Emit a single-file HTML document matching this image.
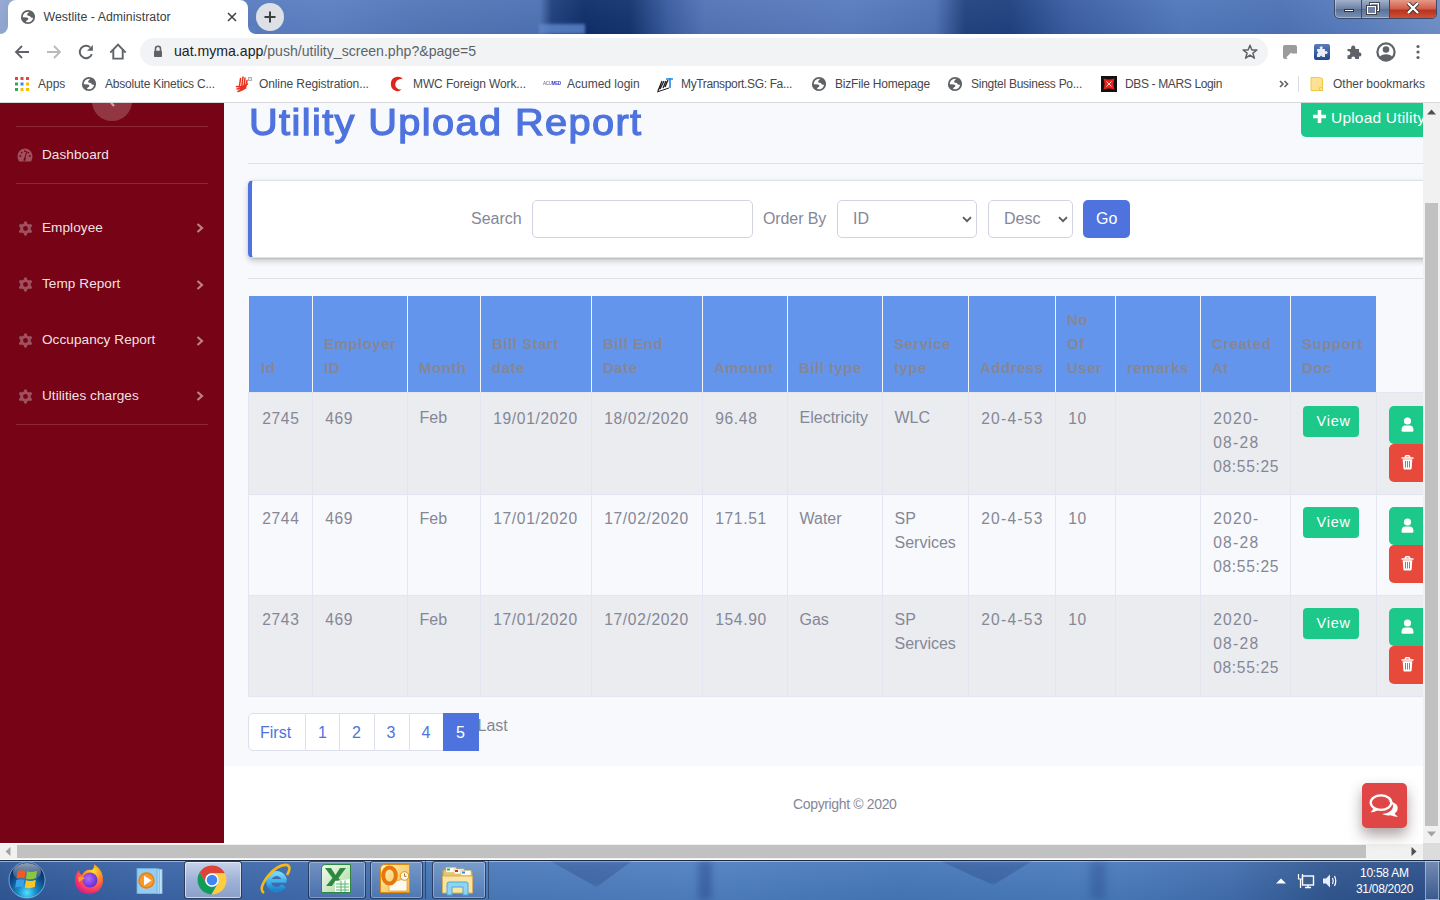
<!DOCTYPE html>
<html><head><meta charset="utf-8">
<style>
*{margin:0;padding:0;box-sizing:border-box}
html,body{width:1440px;height:900px;overflow:hidden;background:#fff;font-family:"Liberation Sans",sans-serif}
.a{position:absolute;white-space:nowrap;line-height:1}
#desk{position:absolute;left:0;top:0;width:1440px;height:34px;
background:
 linear-gradient(180deg,rgba(255,255,255,.04),rgba(0,0,0,.03)),
 linear-gradient(90deg,#93a8d2 0px,#8ea4cf 8px,#6a8ac6 120px,#5a7cc0 250px,#5d7fc2 330px,#5577b8 420px,#4f72b4 540px,#1f407e 552px,#0f2f6a 585px,#143470 630px,#3a5ca0 668px,#5474b6 705px,#5a7cbe 850px,#5072b5 935px,#21437f 965px,#1f417f 1010px,#3b5ea3 1070px,#5278bb 1180px,#4e73b5 1280px,#5a7fc0 1360px,#7090c8 1440px);}
#tab{position:absolute;left:8px;top:0;width:240px;height:34px;background:#fff;border-radius:8px 8px 0 0}
#tabflareL{position:absolute;left:0;top:26px;width:8px;height:8px;background:#fff}
#tabflareL:after{content:"";position:absolute;left:0;top:0;width:8px;height:8px;background:#8fa4cf;border-bottom-right-radius:8px}
#tabflareR{position:absolute;left:248px;top:26px;width:8px;height:8px;background:#fff}
#tabflareR:after{content:"";position:absolute;left:0;top:0;width:8px;height:8px;background:#5a7ec0;border-bottom-left-radius:8px}
#toolbar{position:absolute;left:0;top:34px;width:1440px;height:68px;background:#fff}
#omni{position:absolute;left:140px;top:38px;width:1128px;height:28px;background:#f1f3f4;border-radius:14px}
#sep{position:absolute;left:0;top:102px;width:1440px;height:1px;background:#d6d8db}
#sidebar{position:absolute;left:0;top:103px;width:224px;height:740px;background:#770416;overflow:hidden}
#main{position:absolute;left:224px;top:103px;width:1199px;height:663px;background:#f8f9fc;overflow:hidden}
#footer{position:absolute;left:224px;top:766px;width:1199px;height:77px;background:#fff}
#vscroll{position:absolute;left:1423px;top:103px;width:17px;height:740px;background:#f1f1f1}
#hscroll{position:absolute;left:0;top:843px;width:1423px;height:17px;background:#f1f1f1}
#corner{position:absolute;left:1423px;top:843px;width:17px;height:17px;background:#dcdcdc}
#taskbar{position:absolute;left:0;top:860px;width:1440px;height:40px;
background:linear-gradient(180deg,rgba(255,255,255,.06),rgba(0,0,0,.04)),linear-gradient(90deg,#2f5796 0,#3a64a6 150px,#3f6aac 300px,#4a7aba 480px,#4f7fc0 700px,#4577b8 900px,#4a7bbd 1100px,#416eae 1230px,#30568f 1330px,#2b4e8a 1440px);}
.sb-item{position:absolute;left:42px;color:#f3e6e8;font-size:13.5px}
.bm{top:78px;font-size:12px;color:#45484c}
th,td{font-family:"Liberation Sans",sans-serif}
</style></head><body>
<div id="desk"></div>
<div class="a" style="left:539px;top:24px;width:46px;height:10px;background:rgba(95,135,205,.8);filter:blur(1.5px)"></div>
<div id="tabflareL"></div><div id="tabflareR"></div>
<div id="tab"></div>
<div id="toolbar"></div>
<div id="omni"></div>
<div id="sep"></div>
<div id="chrome"><svg width="0" height="0" style="position:absolute"><defs><clipPath id="gc"><circle cx="7" cy="7" r="6.9"/></clipPath><g id="globe"><circle cx="7" cy="7" r="6.1" fill="none" stroke="#5f6368" stroke-width="1.8"/><g clip-path="url(#gc)"><path d="M8.8 1 Q7.6 2.6 6.6 3.4 Q5.7 4.3 6.3 5.3 Q7.2 6 8.5 6.1 Q9.6 6.4 9.8 7.5 L14 8.2 L14 1Z" fill="#5f6368"/><path d="M0 7.3 Q3.8 7.1 6.1 7.5 Q7.6 8.1 7.5 9.1 Q7.2 10.1 5.8 10.4 Q4.7 11.1 4.6 14 L0 14Z" fill="#5f6368"/></g></g></defs></svg>
<!-- tab contents -->
<svg class="a" style="left:21px;top:10px" width="14" height="14" viewBox="0 0 14 14"><use href="#globe"/></svg>
<div class="a" style="left:43.5px;top:11px;font-size:12.3px;color:#3c4043;letter-spacing:0.04px">Westlite - Administrator</div>
<svg class="a" style="left:227px;top:12px" width="10" height="10" viewBox="0 0 10 10"><path d="M1 1L9 9M9 1L1 9" stroke="#3c4043" stroke-width="1.5"/></svg>
<!-- new tab -->
<div class="a" style="left:256px;top:3px;width:28px;height:28px;border-radius:14px;background:#dde0e5"></div>
<svg class="a" style="left:264px;top:11px" width="12" height="12" viewBox="0 0 12 12"><path d="M6 0.5V11.5M0.5 6H11.5" stroke="#3c4043" stroke-width="2"/></svg>
<!-- window controls -->
<div class="a" style="left:1334px;top:-2px;width:103px;height:21px;border:1px solid #3b4a66;border-radius:0 0 5px 5px;overflow:hidden;background:linear-gradient(#a8b6cf,#6f83a8 50%,#5a6f96 51%,#7a8fb5);box-shadow:0 0 0 1px rgba(255,255,255,.35) inset">
 <div style="position:absolute;left:26px;top:0;width:1px;height:21px;background:#3b4a66"></div>
 <div style="position:absolute;left:54px;top:0;width:48px;height:21px;background:linear-gradient(#e8a090,#d0604a 45%,#b83420 55%,#d45a3c);border-left:1px solid #3b4a66"></div>
 <div style="position:absolute;left:9px;top:10px;width:10px;height:3px;background:#fff;border:1px solid #333"></div>
 <div style="position:absolute;left:35px;top:4px;width:9px;height:8px;border:1.5px solid #fff;outline:1px solid #444"></div>
 <div style="position:absolute;left:32px;top:7px;width:9px;height:8px;border:1.5px solid #fff;background:#6f83a8;outline:1px solid #444"></div>
 <svg style="position:absolute;left:71px;top:3px" width="14" height="12" viewBox="0 0 14 12"><path d="M2 1L12 11M12 1L2 11" stroke="#333" stroke-width="4"/><path d="M2 1L12 11M12 1L2 11" stroke="#fff" stroke-width="2.4"/></svg>
</div>
<!-- toolbar icons -->
<svg class="a" style="left:14px;top:44px" width="16" height="16" viewBox="0 0 16 16"><path d="M15 8H2.5M8 2L2 8L8 14" fill="none" stroke="#5f6368" stroke-width="1.8"/></svg>
<svg class="a" style="left:46px;top:44px" width="16" height="16" viewBox="0 0 16 16"><path d="M1 8H13.5M8 2L14 8L8 14" fill="none" stroke="#b9babc" stroke-width="1.8"/></svg>
<svg class="a" style="left:78px;top:44px" width="16" height="16" viewBox="0 0 16 16"><path d="M13.83 10.12A6.2 6.2 0 1 1 12.2 3.4" fill="none" stroke="#5f6368" stroke-width="1.9"/><path d="M14.9 0.9V6.8H9Z" fill="#5f6368"/></svg>
<svg class="a" style="left:109px;top:43px" width="18" height="18" viewBox="0 0 18 18"><path d="M1.3 9.6L9 1.6L16.7 9.6" fill="none" stroke="#5f6368" stroke-width="1.9"/><path d="M4.3 6.8V15.6H13.7V6.8" fill="none" stroke="#5f6368" stroke-width="1.9"/></svg>
<!-- lock -->
<svg class="a" style="left:153px;top:45px" width="10" height="13" viewBox="0 0 10 13"><path d="M2.5 6V3.8A2.5 2.5 0 0 1 7.5 3.8V6" fill="none" stroke="#5f6368" stroke-width="1.6"/><rect x="1" y="5.8" width="8" height="6.2" rx="0.8" fill="#5f6368"/></svg>
<div class="a" style="left:174px;top:44px;font-size:14.1px;color:#202124;letter-spacing:0px">uat.myma.app<span style="color:#5f6368">/push/utility_screen.php?&amp;page=5</span></div>
<!-- star -->
<svg class="a" style="left:1242px;top:44px" width="16" height="16" viewBox="0 0 16 16"><path d="M8 1.3L9.9 6H14.9L10.9 9.1L12.4 14.2L8 11.2L3.6 14.2L5.1 9.1L1.1 6H6.1Z" fill="none" stroke="#5f6368" stroke-width="1.5" stroke-linejoin="round"/></svg>
<!-- extension icons -->
<svg class="a" style="left:1283px;top:45px" width="14" height="14" viewBox="0 0 14 14"><path d="M2 0H12Q14 0 14 2V8.5H8.7L8.2 7.6L3.2 12.6L4.6 14H2Q0 14 0 12V2Q0 0 2 0Z" fill="#9b9b9b"/></svg>
<svg class="a" style="left:1314px;top:44px" width="16" height="16" viewBox="0 0 16 16"><defs><linearGradient id="pz" x1="0" y1="0" x2="0" y2="1"><stop offset="0" stop-color="#5b7cb6"/><stop offset="1" stop-color="#22458e"/></linearGradient></defs><rect x="0" y="0" width="16" height="16" rx="2" fill="url(#pz)"/><rect x="3" y="5" width="8" height="8" fill="#e8ecf4"/><circle cx="7.2" cy="3.8" r="1.6" fill="#e8ecf4"/><circle cx="12" cy="8.5" r="1.6" fill="#e8ecf4"/><circle cx="3" cy="8.6" r="1.1" fill="#3b5ea0"/><circle cx="7.2" cy="12.8" r="1.1" fill="#3b5ea0"/></svg>
<svg class="a" style="left:1346px;top:44px" width="16" height="16" viewBox="0 0 16 16"><path d="M1.5 5H5Q5 1.5 7.2 1.5Q9.5 1.5 9.5 5H13V8.3Q15.5 8.3 15.5 10.4Q15.5 12.6 13 12.6V15H9.3Q9.3 12.6 7.3 12.6Q5.3 12.6 5.3 15H1.5V11.3Q4.3 11.3 4.3 9.2Q4.3 7.1 1.5 7.1Z" fill="#5f6368"/></svg>
<svg class="a" style="left:1376px;top:42px" width="20" height="20" viewBox="0 0 20 20"><circle cx="10" cy="10" r="8.6" fill="none" stroke="#5f6368" stroke-width="2.2"/><circle cx="10" cy="7.5" r="3.3" fill="#5f6368"/><path d="M3.6 15Q5.5 12.2 10 12.2Q14.5 12.2 16.4 15Q14 18.3 10 18.3Q6 18.3 3.6 15Z" fill="#5f6368"/></svg>
<svg class="a" style="left:1415px;top:44px" width="6" height="16" viewBox="0 0 6 16"><circle cx="3" cy="2.5" r="1.6" fill="#5f6368"/><circle cx="3" cy="8" r="1.6" fill="#5f6368"/><circle cx="3" cy="13.5" r="1.6" fill="#5f6368"/></svg>
<!-- bookmarks -->
<svg class="a" style="left:15px;top:77px" width="14" height="14" viewBox="0 0 14 14">
<rect x="0" y="0" width="3" height="3" fill="#ea4335"/><rect x="5.5" y="0" width="3" height="3" fill="#ea4335"/><rect x="11" y="0" width="3" height="3" fill="#ea4335"/>
<rect x="0" y="5.5" width="3" height="3" fill="#34a853"/><rect x="5.5" y="5.5" width="3" height="3" fill="#4285f4"/><rect x="11" y="5.5" width="3" height="3" fill="#fbbc04"/>
<rect x="0" y="11" width="3" height="3" fill="#34a853"/><rect x="5.5" y="11" width="3" height="3" fill="#fbbc04"/><rect x="11" y="11" width="3" height="3" fill="#fbbc04"/></svg>
<div class="a bm" style="left:38px">Apps</div>
<svg class="a gl" style="left:82px;top:77px" width="14" height="14" viewBox="0 0 14 14"><use href="#globe"/></svg>
<div class="a bm" style="left:105px;letter-spacing:-0.19px">Absolute Kinetics C...</div>
<svg class="a" style="left:235px;top:75px" width="18" height="18" viewBox="0 0 18 18"><path d="M4.5 11L5.5 3.5M6.8 11L8 2M9 11L10 3M11 10.5L12 5.5M1.5 11.5Q6 12 9 11L12.5 9M2 14Q7 13.5 11 11.5M3 16.5Q7 15 10.5 13" fill="none" stroke="#e8321e" stroke-width="1.5" stroke-linecap="round"/><rect x="13" y="2" width="4" height="4" fill="#b0b0b0"/><rect x="14" y="3" width="2" height="2" fill="#e8e8e8"/></svg>
<div class="a bm" style="left:259px;letter-spacing:-0.10px">Online Registration...</div>
<svg class="a" style="left:389px;top:76px" width="16" height="16" viewBox="0 0 16 16"><path d="M14 3.2Q11.8 0.6 8.3 0.8Q2.2 1.4 1.8 7.8Q2 14 8 15.2Q10.6 15.4 12.6 13.6Q8.2 13.8 6.6 10.5Q5.6 7 8 4.5Q10.4 2.3 14 3.2Z" fill="#e3211b"/></svg>
<div class="a bm" style="left:413px;letter-spacing:-0.11px">MWC Foreign Work...</div>
<div class="a" style="left:543px;top:82px;font-size:4.6px;color:#666;letter-spacing:-0.35px;transform:scaleY(1.1)">ACU<span style="color:#3a3ad0;font-weight:bold">MED</span></div>
<div class="a bm" style="left:567px">Acumed login</div>
<svg class="a" style="left:656px;top:75px" width="18" height="18" viewBox="0 0 18 18"><path d="M2 16L6 6M4 14L8 6M7 13L10 6M9 12L12 5" stroke="#222" stroke-width="1.3"/><path d="M10 4H17M14 3V13" stroke="#1e88e5" stroke-width="1.6"/><path d="M1 17L13 13" stroke="#222" stroke-width="1"/></svg>
<div class="a bm" style="left:681px;letter-spacing:-0.35px">MyTransport.SG: Fa...</div>
<svg class="a gl" style="left:812px;top:77px" width="14" height="14" viewBox="0 0 14 14"><use href="#globe"/></svg>
<div class="a bm" style="left:835px;letter-spacing:-0.19px">BizFile Homepage</div>
<svg class="a gl" style="left:948px;top:77px" width="14" height="14" viewBox="0 0 14 14"><use href="#globe"/></svg>
<div class="a bm" style="left:971px;letter-spacing:-0.26px">Singtel Business Po...</div>
<div class="a" style="left:1101px;top:76px;width:16px;height:16px;background:#111"></div>
<svg class="a" style="left:1102px;top:77px" width="14" height="14" viewBox="0 0 14 14"><path d="M1.5 1.5Q7 3.5 12.5 1.5Q10.5 7 12.5 12.5Q7 10.5 1.5 12.5Q3.5 7 1.5 1.5Z" fill="#e8231c"/><path d="M4.5 4.5L9.5 9.5M9.5 4.5L4.5 9.5" stroke="#fff" stroke-width="0.8"/></svg>
<div class="a bm" style="left:1125px;letter-spacing:-0.36px">DBS - MARS Login</div>
<svg class="a" style="left:1279px;top:80px" width="10" height="8" viewBox="0 0 10 8"><path d="M1 1L4 4L1 7M5.5 1L8.5 4L5.5 7" fill="none" stroke="#5f6368" stroke-width="1.6"/></svg>
<div class="a" style="left:1298px;top:76px;width:1px;height:16px;background:#dadce0"></div>
<svg class="a" style="left:1310px;top:76px" width="14" height="16" viewBox="0 0 14 16"><path d="M1 1.5H8.5L12.5 2.5V14.5H1Z" fill="#fde293" stroke="#f5c842" stroke-width="1"/><path d="M9.5 11.5H12.5V14.5H9.5Z" fill="none" stroke="#f5c842" stroke-width="1"/></svg>
<div class="a bm" style="left:1333px">Other bookmarks</div>
</div>
<div id="sidebar"><div class="a" style="left:92px;top:-22px;width:40px;height:40px;border-radius:20px;background:rgba(255,255,255,.2)"></div>
<svg class="a" style="left:106px;top:-10px" width="10" height="14" viewBox="0 0 10 14"><path d="M8 1L3 7L8 13" fill="none" stroke="rgba(255,255,255,.55)" stroke-width="2.2"/></svg>
<div class="a" style="left:16px;top:23px;width:192px;height:1px;background:rgba(255,255,255,.15)"></div>
<div class="a" style="left:16px;top:80px;width:192px;height:1px;background:rgba(255,255,255,.15)"></div>
<div class="a" style="left:16px;top:321px;width:192px;height:1px;background:rgba(255,255,255,.15)"></div>
<svg class="a" style="left:17px;top:45px" width="16" height="14" viewBox="0 0 16 14"><path d="M8 0.5A7.5 7.5 0 0 0 0.5 8Q0.5 11.5 2 13.5H14Q15.5 11.5 15.5 8A7.5 7.5 0 0 0 8 0.5Z" fill="rgba(255,255,255,.3)"/><circle cx="3.3" cy="8" r="0.9" fill="#770416"/><circle cx="12.7" cy="8" r="0.9" fill="#770416"/><circle cx="4.7" cy="4.6" r="0.9" fill="#770416"/><circle cx="11.3" cy="4.6" r="0.9" fill="#770416"/><circle cx="8" cy="3.2" r="0.9" fill="#770416"/><path d="M9.8 3.2L7.7 10.8" stroke="#770416" stroke-width="1"/><path d="M6.3 12.5L7.4 9.6L8.9 10.1L8.3 12.9Z" fill="#770416"/></svg>
<div class="a" style="left:42px;top:44.5px;font-size:13.6px;color:rgba(255,255,255,.9);letter-spacing:0.05px">Dashboard</div>
<svg class="a" style="left:17.5px;top:117.5px" width="15" height="15" viewBox="0 0 16 16"><path fill="rgba(255,255,255,.3)" fill-rule="evenodd" d="M6.6 0.5H9.4L9.8 2.6Q10.9 3 11.8 3.7L13.8 3L15.2 5.4L13.6 6.8Q13.8 8 13.6 9.2L15.2 10.6L13.8 13L11.8 12.3Q10.9 13 9.8 13.4L9.4 15.5H6.6L6.2 13.4Q5.1 13 4.2 12.3L2.2 13L0.8 10.6L2.4 9.2Q2.2 8 2.4 6.8L0.8 5.4L2.2 3L4.2 3.7Q5.1 3 6.2 2.6ZM8 5.4A2.6 2.6 0 1 0 8 10.6A2.6 2.6 0 1 0 8 5.4Z"/></svg>
<div class="a" style="left:42px;top:117.5px;font-size:13.6px;color:rgba(255,255,255,.9);letter-spacing:0.05px">Employee</div>
<svg class="a" style="left:196px;top:120px" width="8" height="10" viewBox="0 0 8 10"><path d="M1.5 1L6 5L1.5 9" fill="none" stroke="rgba(255,255,255,.5)" stroke-width="2.2"/></svg>
<svg class="a" style="left:17.5px;top:174.0px" width="15" height="15" viewBox="0 0 16 16"><path fill="rgba(255,255,255,.3)" fill-rule="evenodd" d="M6.6 0.5H9.4L9.8 2.6Q10.9 3 11.8 3.7L13.8 3L15.2 5.4L13.6 6.8Q13.8 8 13.6 9.2L15.2 10.6L13.8 13L11.8 12.3Q10.9 13 9.8 13.4L9.4 15.5H6.6L6.2 13.4Q5.1 13 4.2 12.3L2.2 13L0.8 10.6L2.4 9.2Q2.2 8 2.4 6.8L0.8 5.4L2.2 3L4.2 3.7Q5.1 3 6.2 2.6ZM8 5.4A2.6 2.6 0 1 0 8 10.6A2.6 2.6 0 1 0 8 5.4Z"/></svg>
<div class="a" style="left:42px;top:174.0px;font-size:13.6px;color:rgba(255,255,255,.9);letter-spacing:0.05px">Temp Report</div>
<svg class="a" style="left:196px;top:176.5px" width="8" height="10" viewBox="0 0 8 10"><path d="M1.5 1L6 5L1.5 9" fill="none" stroke="rgba(255,255,255,.5)" stroke-width="2.2"/></svg>
<svg class="a" style="left:17.5px;top:230.0px" width="15" height="15" viewBox="0 0 16 16"><path fill="rgba(255,255,255,.3)" fill-rule="evenodd" d="M6.6 0.5H9.4L9.8 2.6Q10.9 3 11.8 3.7L13.8 3L15.2 5.4L13.6 6.8Q13.8 8 13.6 9.2L15.2 10.6L13.8 13L11.8 12.3Q10.9 13 9.8 13.4L9.4 15.5H6.6L6.2 13.4Q5.1 13 4.2 12.3L2.2 13L0.8 10.6L2.4 9.2Q2.2 8 2.4 6.8L0.8 5.4L2.2 3L4.2 3.7Q5.1 3 6.2 2.6ZM8 5.4A2.6 2.6 0 1 0 8 10.6A2.6 2.6 0 1 0 8 5.4Z"/></svg>
<div class="a" style="left:42px;top:230.0px;font-size:13.6px;color:rgba(255,255,255,.9);letter-spacing:0.05px">Occupancy Report</div>
<svg class="a" style="left:196px;top:232.5px" width="8" height="10" viewBox="0 0 8 10"><path d="M1.5 1L6 5L1.5 9" fill="none" stroke="rgba(255,255,255,.5)" stroke-width="2.2"/></svg>
<svg class="a" style="left:17.5px;top:285.5px" width="15" height="15" viewBox="0 0 16 16"><path fill="rgba(255,255,255,.3)" fill-rule="evenodd" d="M6.6 0.5H9.4L9.8 2.6Q10.9 3 11.8 3.7L13.8 3L15.2 5.4L13.6 6.8Q13.8 8 13.6 9.2L15.2 10.6L13.8 13L11.8 12.3Q10.9 13 9.8 13.4L9.4 15.5H6.6L6.2 13.4Q5.1 13 4.2 12.3L2.2 13L0.8 10.6L2.4 9.2Q2.2 8 2.4 6.8L0.8 5.4L2.2 3L4.2 3.7Q5.1 3 6.2 2.6ZM8 5.4A2.6 2.6 0 1 0 8 10.6A2.6 2.6 0 1 0 8 5.4Z"/></svg>
<div class="a" style="left:42px;top:285.5px;font-size:13.6px;color:rgba(255,255,255,.9);letter-spacing:0.05px">Utilities charges</div>
<svg class="a" style="left:196px;top:288px" width="8" height="10" viewBox="0 0 8 10"><path d="M1.5 1L6 5L1.5 9" fill="none" stroke="rgba(255,255,255,.5)" stroke-width="2.2"/></svg></div>
<div id="main"><div class="a" style="left:25px;top:1.2px;font-size:37.5px;color:#4e73df;letter-spacing:1.3px;-webkit-text-stroke:1.25px #4e73df;transform:scaleX(1.06);transform-origin:0 0">Utility Upload Report</div>
<div class="a" style="left:1077px;top:0px;width:140px;height:34px;background:#1cc88a;border-radius:0 0 0 5px"></div>
<svg class="a" style="left:1089px;top:7px" width="13" height="13" viewBox="0 0 13 13"><path d="M6.5 0V13M0 6.5H13" stroke="#fff" stroke-width="3.6"/></svg>
<div class="a" style="left:1107px;top:6.6px;font-size:15.5px;color:#fff;letter-spacing:0.2px">Upload Utility</div>
<div class="a" style="left:24px;top:60px;width:1200px;height:1px;background:#dfe0e3"></div>
<div class="a" style="left:24px;top:175px;width:1200px;height:1px;background:#dfe0e3"></div>
<div class="a" style="left:24px;top:77px;width:1200px;height:78px;background:#fff;border:1px solid #dfe1e8;border-left:4px solid #4e73df;border-radius:5px;box-shadow:0 3px 6px rgba(0,0,0,.2),0 1px 2px rgba(0,0,0,.1)"></div>
<div class="a" style="left:247px;top:108.0px;font-size:16px;color:#858796">Search</div>
<div class="a" style="left:308px;top:97px;width:221px;height:38px;background:#fff;border:1px solid #d1d3e2;border-radius:5px"></div>
<div class="a" style="left:539px;top:108.0px;font-size:16px;color:#858796;letter-spacing:-0.1px">Order By</div>
<div class="a" style="left:613px;top:97px;width:140px;height:38px;background:#fff;border:1px solid #d1d3e2;border-radius:5px"></div>
<div class="a" style="left:629px;top:108.0px;font-size:16px;color:#858796">ID</div>
<svg class="a" style="left:738px;top:113px" width="10" height="7" viewBox="0 0 10 7"><path d="M1 1.2L5 5.2L9 1.2" fill="none" stroke="#595b66" stroke-width="1.9"/></svg>
<div class="a" style="left:764px;top:97px;width:85px;height:38px;background:#fff;border:1px solid #d1d3e2;border-radius:5px"></div>
<div class="a" style="left:780px;top:108.0px;font-size:16px;color:#858796">Desc</div>
<svg class="a" style="left:834px;top:113px" width="10" height="7" viewBox="0 0 10 7"><path d="M1 1.2L5 5.2L9 1.2" fill="none" stroke="#595b66" stroke-width="1.9"/></svg>
<div class="a" style="left:859px;top:97px;width:47px;height:38px;background:#4e73df;border-radius:5px"></div>
<div class="a" style="left:872px;top:108.0px;font-size:16px;color:#fff">Go</div>
<div class="a" style="left:25px;top:193px;width:1127px;height:96px;background:#6495ed"></div>
<div class="a" style="left:88px;top:193px;width:1px;height:96px;background:#f2f4fa"></div>
<div class="a" style="left:183px;top:193px;width:1px;height:96px;background:#f2f4fa"></div>
<div class="a" style="left:256px;top:193px;width:1px;height:96px;background:#f2f4fa"></div>
<div class="a" style="left:367px;top:193px;width:1px;height:96px;background:#f2f4fa"></div>
<div class="a" style="left:478px;top:193px;width:1px;height:96px;background:#f2f4fa"></div>
<div class="a" style="left:563px;top:193px;width:1px;height:96px;background:#f2f4fa"></div>
<div class="a" style="left:658px;top:193px;width:1px;height:96px;background:#f2f4fa"></div>
<div class="a" style="left:744px;top:193px;width:1px;height:96px;background:#f2f4fa"></div>
<div class="a" style="left:831px;top:193px;width:1px;height:96px;background:#f2f4fa"></div>
<div class="a" style="left:891px;top:193px;width:1px;height:96px;background:#f2f4fa"></div>
<div class="a" style="left:976px;top:193px;width:1px;height:96px;background:#f2f4fa"></div>
<div class="a" style="left:1066px;top:193px;width:1px;height:96px;background:#f2f4fa"></div>
<div class="a" style="left:37px;top:256.8px;font-size:15px;font-weight:bold;color:#858796;letter-spacing:0.5px">Id</div>
<div class="a" style="left:100px;top:232.8px;font-size:15px;font-weight:bold;color:#858796;letter-spacing:0.5px">Employer</div>
<div class="a" style="left:100px;top:256.8px;font-size:15px;font-weight:bold;color:#858796;letter-spacing:0.5px">ID</div>
<div class="a" style="left:195px;top:256.8px;font-size:15px;font-weight:bold;color:#858796;letter-spacing:0.5px">Month</div>
<div class="a" style="left:268px;top:232.8px;font-size:15px;font-weight:bold;color:#858796;letter-spacing:0.5px">Bill Start</div>
<div class="a" style="left:268px;top:256.8px;font-size:15px;font-weight:bold;color:#858796;letter-spacing:0.5px">date</div>
<div class="a" style="left:379px;top:232.8px;font-size:15px;font-weight:bold;color:#858796;letter-spacing:0.5px">Bill End</div>
<div class="a" style="left:379px;top:256.8px;font-size:15px;font-weight:bold;color:#858796;letter-spacing:0.5px">Date</div>
<div class="a" style="left:490px;top:256.8px;font-size:15px;font-weight:bold;color:#858796;letter-spacing:0.5px">Amount</div>
<div class="a" style="left:575px;top:256.8px;font-size:15px;font-weight:bold;color:#858796;letter-spacing:0.5px">Bill type</div>
<div class="a" style="left:670px;top:232.8px;font-size:15px;font-weight:bold;color:#858796;letter-spacing:0.5px">Service</div>
<div class="a" style="left:670px;top:256.8px;font-size:15px;font-weight:bold;color:#858796;letter-spacing:0.5px">type</div>
<div class="a" style="left:756px;top:256.8px;font-size:15px;font-weight:bold;color:#858796;letter-spacing:0.5px">Address</div>
<div class="a" style="left:843px;top:208.8px;font-size:15px;font-weight:bold;color:#858796;letter-spacing:0.5px">No</div>
<div class="a" style="left:843px;top:232.8px;font-size:15px;font-weight:bold;color:#858796;letter-spacing:0.5px">Of</div>
<div class="a" style="left:843px;top:256.8px;font-size:15px;font-weight:bold;color:#858796;letter-spacing:0.5px">User</div>
<div class="a" style="left:903px;top:256.8px;font-size:15px;font-weight:bold;color:#858796;letter-spacing:0.5px">remarks</div>
<div class="a" style="left:988px;top:232.8px;font-size:15px;font-weight:bold;color:#858796;letter-spacing:0.5px">Created</div>
<div class="a" style="left:988px;top:256.8px;font-size:15px;font-weight:bold;color:#858796;letter-spacing:0.5px">At</div>
<div class="a" style="left:1078px;top:232.8px;font-size:15px;font-weight:bold;color:#858796;letter-spacing:0.5px">Support</div>
<div class="a" style="left:1078px;top:256.8px;font-size:15px;font-weight:bold;color:#858796;letter-spacing:0.5px">Doc</div>
<div class="a" style="left:25px;top:289px;width:1191px;height:102px;background:#eaecf0"></div>
<div class="a" style="left:25px;top:289px;width:1191px;height:1px;background:#e3e6f0"></div>
<div class="a" style="left:24px;top:289px;width:1px;height:102px;background:#e3e6f0"></div>
<div class="a" style="left:88px;top:289px;width:1px;height:102px;background:#e3e6f0"></div>
<div class="a" style="left:183px;top:289px;width:1px;height:102px;background:#e3e6f0"></div>
<div class="a" style="left:256px;top:289px;width:1px;height:102px;background:#e3e6f0"></div>
<div class="a" style="left:367px;top:289px;width:1px;height:102px;background:#e3e6f0"></div>
<div class="a" style="left:478px;top:289px;width:1px;height:102px;background:#e3e6f0"></div>
<div class="a" style="left:563px;top:289px;width:1px;height:102px;background:#e3e6f0"></div>
<div class="a" style="left:658px;top:289px;width:1px;height:102px;background:#e3e6f0"></div>
<div class="a" style="left:744px;top:289px;width:1px;height:102px;background:#e3e6f0"></div>
<div class="a" style="left:831px;top:289px;width:1px;height:102px;background:#e3e6f0"></div>
<div class="a" style="left:891px;top:289px;width:1px;height:102px;background:#e3e6f0"></div>
<div class="a" style="left:976px;top:289px;width:1px;height:102px;background:#e3e6f0"></div>
<div class="a" style="left:1066px;top:289px;width:1px;height:102px;background:#e3e6f0"></div>
<div class="a" style="left:1152px;top:289px;width:1px;height:102px;background:#e3e6f0"></div>
<div class="a" style="left:38.19999999999999px;top:307.6px;font-size:15.6px;letter-spacing:0.65px;color:#858796">2745</div>
<div class="a" style="left:101.19999999999999px;top:307.6px;font-size:15.6px;letter-spacing:0.65px;color:#858796">469</div>
<div class="a" style="left:195.5px;top:307.3px;font-size:16px;color:#858796">Feb</div>
<div class="a" style="left:269.2px;top:307.6px;font-size:15.6px;letter-spacing:0.65px;color:#858796">19/01/2020</div>
<div class="a" style="left:380.20000000000005px;top:307.6px;font-size:15.6px;letter-spacing:0.65px;color:#858796">18/02/2020</div>
<div class="a" style="left:491.20000000000005px;top:307.6px;font-size:15.6px;letter-spacing:0.65px;color:#858796">96.48</div>
<div class="a" style="left:575.5px;top:307.3px;font-size:16px;color:#858796">Electricity</div>
<div class="a" style="left:670.5px;top:307.3px;font-size:16px;color:#858796">WLC</div>
<div class="a" style="left:757.2px;top:307.6px;font-size:15.6px;letter-spacing:1.25px;color:#858796">20-4-53</div>
<div class="a" style="left:844.2px;top:307.6px;font-size:15.6px;letter-spacing:0.65px;color:#858796">10</div>
<div class="a" style="left:903.5px;top:307.3px;font-size:16px;color:#858796"></div>
<div class="a" style="left:989.2px;top:307.6px;font-size:15.6px;letter-spacing:1.25px;color:#858796">2020-</div>
<div class="a" style="left:989.2px;top:331.6px;font-size:15.6px;letter-spacing:1.25px;color:#858796">08-28</div>
<div class="a" style="left:989.2px;top:355.6px;font-size:15.6px;letter-spacing:0.65px;color:#858796">08:55:25</div>
<div class="a" style="left:1079px;top:303px;width:56px;height:31px;background:#1cc88a;border-radius:4px"></div>
<div class="a" style="left:1092.5px;top:311.3px;font-size:14.5px;color:#fff;letter-spacing:0.8px">View</div>
<div class="a" style="left:1165px;top:303px;width:60px;height:38px;background:#1cc88a;border-radius:5px 0 0 5px"></div>
<div class="a" style="left:1165px;top:341px;width:60px;height:38px;background:#e74a3b;border-radius:5px 0 0 5px"></div>
<svg class="a" style="left:1177px;top:314px" width="13" height="15" viewBox="0 0 13 15"><circle cx="6.5" cy="4" r="3.6" fill="#fff"/><path d="M0.5 13.5Q0.5 8.6 4.3 8.6H8.7Q12.5 8.6 12.5 13.5Q12.5 14.8 11 14.8H2Q0.5 14.8 0.5 13.5Z" fill="#fff"/></svg>
<svg class="a" style="left:1177px;top:352px" width="13" height="15" viewBox="0 0 13 15"><path d="M0.5 3H12.5M4.5 3V1.5Q4.5 0.8 5.2 0.8H7.8Q8.5 0.8 8.5 1.5V3" fill="none" stroke="#fff" stroke-width="1.6"/><path d="M1.7 4.2H11.3L10.6 13.6Q10.5 14.6 9.5 14.6H3.5Q2.5 14.6 2.4 13.6Z" fill="#fff"/><path d="M4.5 6V12.5M6.5 6V12.5M8.5 6V12.5" stroke="#e74a3b" stroke-width="0.9"/></svg>
<div class="a" style="left:25px;top:391px;width:1191px;height:101px;background:#f8f9fc"></div>
<div class="a" style="left:25px;top:391px;width:1191px;height:1px;background:#e3e6f0"></div>
<div class="a" style="left:24px;top:391px;width:1px;height:101px;background:#e3e6f0"></div>
<div class="a" style="left:88px;top:391px;width:1px;height:101px;background:#e3e6f0"></div>
<div class="a" style="left:183px;top:391px;width:1px;height:101px;background:#e3e6f0"></div>
<div class="a" style="left:256px;top:391px;width:1px;height:101px;background:#e3e6f0"></div>
<div class="a" style="left:367px;top:391px;width:1px;height:101px;background:#e3e6f0"></div>
<div class="a" style="left:478px;top:391px;width:1px;height:101px;background:#e3e6f0"></div>
<div class="a" style="left:563px;top:391px;width:1px;height:101px;background:#e3e6f0"></div>
<div class="a" style="left:658px;top:391px;width:1px;height:101px;background:#e3e6f0"></div>
<div class="a" style="left:744px;top:391px;width:1px;height:101px;background:#e3e6f0"></div>
<div class="a" style="left:831px;top:391px;width:1px;height:101px;background:#e3e6f0"></div>
<div class="a" style="left:891px;top:391px;width:1px;height:101px;background:#e3e6f0"></div>
<div class="a" style="left:976px;top:391px;width:1px;height:101px;background:#e3e6f0"></div>
<div class="a" style="left:1066px;top:391px;width:1px;height:101px;background:#e3e6f0"></div>
<div class="a" style="left:1152px;top:391px;width:1px;height:101px;background:#e3e6f0"></div>
<div class="a" style="left:38.19999999999999px;top:408.2px;font-size:15.6px;letter-spacing:0.65px;color:#858796">2744</div>
<div class="a" style="left:101.19999999999999px;top:408.2px;font-size:15.6px;letter-spacing:0.65px;color:#858796">469</div>
<div class="a" style="left:195.5px;top:407.9px;font-size:16px;color:#858796">Feb</div>
<div class="a" style="left:269.2px;top:408.2px;font-size:15.6px;letter-spacing:0.65px;color:#858796">17/01/2020</div>
<div class="a" style="left:380.20000000000005px;top:408.2px;font-size:15.6px;letter-spacing:0.65px;color:#858796">17/02/2020</div>
<div class="a" style="left:491.20000000000005px;top:408.2px;font-size:15.6px;letter-spacing:0.65px;color:#858796">171.51</div>
<div class="a" style="left:575.5px;top:407.9px;font-size:16px;color:#858796">Water</div>
<div class="a" style="left:670.5px;top:407.9px;font-size:16px;color:#858796">SP</div>
<div class="a" style="left:670.5px;top:431.9px;font-size:16px;color:#858796">Services</div>
<div class="a" style="left:757.2px;top:408.2px;font-size:15.6px;letter-spacing:1.25px;color:#858796">20-4-53</div>
<div class="a" style="left:844.2px;top:408.2px;font-size:15.6px;letter-spacing:0.65px;color:#858796">10</div>
<div class="a" style="left:903.5px;top:407.9px;font-size:16px;color:#858796"></div>
<div class="a" style="left:989.2px;top:408.2px;font-size:15.6px;letter-spacing:1.25px;color:#858796">2020-</div>
<div class="a" style="left:989.2px;top:432.2px;font-size:15.6px;letter-spacing:1.25px;color:#858796">08-28</div>
<div class="a" style="left:989.2px;top:456.2px;font-size:15.6px;letter-spacing:0.65px;color:#858796">08:55:25</div>
<div class="a" style="left:1079px;top:404px;width:56px;height:31px;background:#1cc88a;border-radius:4px"></div>
<div class="a" style="left:1092.5px;top:412.3px;font-size:14.5px;color:#fff;letter-spacing:0.8px">View</div>
<div class="a" style="left:1165px;top:404px;width:60px;height:38px;background:#1cc88a;border-radius:5px 0 0 5px"></div>
<div class="a" style="left:1165px;top:442px;width:60px;height:38px;background:#e74a3b;border-radius:5px 0 0 5px"></div>
<svg class="a" style="left:1177px;top:415px" width="13" height="15" viewBox="0 0 13 15"><circle cx="6.5" cy="4" r="3.6" fill="#fff"/><path d="M0.5 13.5Q0.5 8.6 4.3 8.6H8.7Q12.5 8.6 12.5 13.5Q12.5 14.8 11 14.8H2Q0.5 14.8 0.5 13.5Z" fill="#fff"/></svg>
<svg class="a" style="left:1177px;top:453px" width="13" height="15" viewBox="0 0 13 15"><path d="M0.5 3H12.5M4.5 3V1.5Q4.5 0.8 5.2 0.8H7.8Q8.5 0.8 8.5 1.5V3" fill="none" stroke="#fff" stroke-width="1.6"/><path d="M1.7 4.2H11.3L10.6 13.6Q10.5 14.6 9.5 14.6H3.5Q2.5 14.6 2.4 13.6Z" fill="#fff"/><path d="M4.5 6V12.5M6.5 6V12.5M8.5 6V12.5" stroke="#e74a3b" stroke-width="0.9"/></svg>
<div class="a" style="left:25px;top:492px;width:1191px;height:101px;background:#eaecf0"></div>
<div class="a" style="left:25px;top:492px;width:1191px;height:1px;background:#e3e6f0"></div>
<div class="a" style="left:24px;top:492px;width:1px;height:101px;background:#e3e6f0"></div>
<div class="a" style="left:88px;top:492px;width:1px;height:101px;background:#e3e6f0"></div>
<div class="a" style="left:183px;top:492px;width:1px;height:101px;background:#e3e6f0"></div>
<div class="a" style="left:256px;top:492px;width:1px;height:101px;background:#e3e6f0"></div>
<div class="a" style="left:367px;top:492px;width:1px;height:101px;background:#e3e6f0"></div>
<div class="a" style="left:478px;top:492px;width:1px;height:101px;background:#e3e6f0"></div>
<div class="a" style="left:563px;top:492px;width:1px;height:101px;background:#e3e6f0"></div>
<div class="a" style="left:658px;top:492px;width:1px;height:101px;background:#e3e6f0"></div>
<div class="a" style="left:744px;top:492px;width:1px;height:101px;background:#e3e6f0"></div>
<div class="a" style="left:831px;top:492px;width:1px;height:101px;background:#e3e6f0"></div>
<div class="a" style="left:891px;top:492px;width:1px;height:101px;background:#e3e6f0"></div>
<div class="a" style="left:976px;top:492px;width:1px;height:101px;background:#e3e6f0"></div>
<div class="a" style="left:1066px;top:492px;width:1px;height:101px;background:#e3e6f0"></div>
<div class="a" style="left:1152px;top:492px;width:1px;height:101px;background:#e3e6f0"></div>
<div class="a" style="left:38.19999999999999px;top:508.8px;font-size:15.6px;letter-spacing:0.65px;color:#858796">2743</div>
<div class="a" style="left:101.19999999999999px;top:508.8px;font-size:15.6px;letter-spacing:0.65px;color:#858796">469</div>
<div class="a" style="left:195.5px;top:508.5px;font-size:16px;color:#858796">Feb</div>
<div class="a" style="left:269.2px;top:508.8px;font-size:15.6px;letter-spacing:0.65px;color:#858796">17/01/2020</div>
<div class="a" style="left:380.20000000000005px;top:508.8px;font-size:15.6px;letter-spacing:0.65px;color:#858796">17/02/2020</div>
<div class="a" style="left:491.20000000000005px;top:508.8px;font-size:15.6px;letter-spacing:0.65px;color:#858796">154.90</div>
<div class="a" style="left:575.5px;top:508.5px;font-size:16px;color:#858796">Gas</div>
<div class="a" style="left:670.5px;top:508.5px;font-size:16px;color:#858796">SP</div>
<div class="a" style="left:670.5px;top:532.5px;font-size:16px;color:#858796">Services</div>
<div class="a" style="left:757.2px;top:508.8px;font-size:15.6px;letter-spacing:1.25px;color:#858796">20-4-53</div>
<div class="a" style="left:844.2px;top:508.8px;font-size:15.6px;letter-spacing:0.65px;color:#858796">10</div>
<div class="a" style="left:903.5px;top:508.5px;font-size:16px;color:#858796"></div>
<div class="a" style="left:989.2px;top:508.8px;font-size:15.6px;letter-spacing:1.25px;color:#858796">2020-</div>
<div class="a" style="left:989.2px;top:532.8px;font-size:15.6px;letter-spacing:1.25px;color:#858796">08-28</div>
<div class="a" style="left:989.2px;top:556.8px;font-size:15.6px;letter-spacing:0.65px;color:#858796">08:55:25</div>
<div class="a" style="left:1079px;top:505px;width:56px;height:31px;background:#1cc88a;border-radius:4px"></div>
<div class="a" style="left:1092.5px;top:513.3px;font-size:14.5px;color:#fff;letter-spacing:0.8px">View</div>
<div class="a" style="left:1165px;top:505px;width:60px;height:38px;background:#1cc88a;border-radius:5px 0 0 5px"></div>
<div class="a" style="left:1165px;top:543px;width:60px;height:38px;background:#e74a3b;border-radius:5px 0 0 5px"></div>
<svg class="a" style="left:1177px;top:516px" width="13" height="15" viewBox="0 0 13 15"><circle cx="6.5" cy="4" r="3.6" fill="#fff"/><path d="M0.5 13.5Q0.5 8.6 4.3 8.6H8.7Q12.5 8.6 12.5 13.5Q12.5 14.8 11 14.8H2Q0.5 14.8 0.5 13.5Z" fill="#fff"/></svg>
<svg class="a" style="left:1177px;top:554px" width="13" height="15" viewBox="0 0 13 15"><path d="M0.5 3H12.5M4.5 3V1.5Q4.5 0.8 5.2 0.8H7.8Q8.5 0.8 8.5 1.5V3" fill="none" stroke="#fff" stroke-width="1.6"/><path d="M1.7 4.2H11.3L10.6 13.6Q10.5 14.6 9.5 14.6H3.5Q2.5 14.6 2.4 13.6Z" fill="#fff"/><path d="M4.5 6V12.5M6.5 6V12.5M8.5 6V12.5" stroke="#e74a3b" stroke-width="0.9"/></svg>
<div class="a" style="left:24px;top:593px;width:1192px;height:1px;background:#e3e6f0"></div>
<div class="a" style="left:24px;top:610px;width:196px;height:38px;background:#fff;border:1px solid #dddfeb;border-radius:5px 0 0 5px"></div>
<div class="a" style="left:81px;top:610px;width:1px;height:38px;background:#dddfeb"></div>
<div class="a" style="left:115px;top:610px;width:1px;height:38px;background:#dddfeb"></div>
<div class="a" style="left:150px;top:610px;width:1px;height:38px;background:#dddfeb"></div>
<div class="a" style="left:185px;top:610px;width:1px;height:38px;background:#dddfeb"></div>
<div class="a" style="left:219px;top:610px;width:36px;height:38px;background:#4e73df"></div>
<div class="a" style="left:36px;top:621.5px;font-size:16px;color:#4e73df">First</div>
<div class="a" style="left:94px;top:621.5px;font-size:16px;color:#4e73df">1</div>
<div class="a" style="left:128px;top:621.5px;font-size:16px;color:#4e73df">2</div>
<div class="a" style="left:162.5px;top:621.5px;font-size:16px;color:#4e73df">3</div>
<div class="a" style="left:197.5px;top:621.5px;font-size:16px;color:#4e73df">4</div>
<div class="a" style="left:232px;top:621.5px;font-size:16px;color:#fff">5</div>
<div class="a" style="left:253.5px;top:614.5px;font-size:16px;color:#858796">Last</div></div>
<div id="footer"><div class="a" style="left:569px;top:31.1px;font-size:14px;color:#858796;letter-spacing:-0.35px">Copyright © 2020</div></div>
<div class="a" style="left:1423px;top:103px;width:17px;height:740px;background:#f1f1f1"></div>
<svg class="a" style="left:1427px;top:109px" width="9" height="6" viewBox="0 0 9 6"><path d="M0 5.5L4.5 0.5L9 5.5Z" fill="#505050"/></svg>
<div class="a" style="left:1425px;top:203px;width:13px;height:623px;background:#c1c1c1"></div>
<svg class="a" style="left:1427px;top:831px" width="9" height="6" viewBox="0 0 9 6"><path d="M0 0.5L4.5 5.5L9 0.5Z" fill="#a3a3a3"/></svg>
<div class="a" style="left:0;top:843px;width:1423px;height:17px;background:#fff"></div>
<div class="a" style="left:0;top:844px;width:1423px;height:15px;background:#f1f1f1"></div>
<svg class="a" style="left:5px;top:847px" width="6" height="9" viewBox="0 0 6 9"><path d="M5.5 0L0.5 4.5L5.5 9Z" fill="#a3a3a3"/></svg>
<div class="a" style="left:17px;top:845px;width:1349px;height:13px;background:#c1c1c1"></div>
<svg class="a" style="left:1411px;top:847px" width="6" height="9" viewBox="0 0 6 9"><path d="M0.5 0L5.5 4.5L0.5 9Z" fill="#505050"/></svg>
<div class="a" style="left:1423px;top:843px;width:17px;height:17px;background:#dcdcdc"></div>

<div class="a" style="left:1362px;top:783px;width:45px;height:45px;background:#e04646;border-radius:5px;box-shadow:0 7px 14px rgba(70,45,45,.45)"></div>
<svg class="a" style="left:1369px;top:794px" width="30" height="24" viewBox="0 0 30 24"><path d="M18.5 6.5Q24 7.5 27.5 10.5Q29.5 13 28.5 16Q27.5 18.5 25.5 19.5L29 23Q24 22.5 21.5 21.2Q17 22 13 20Q22.5 19 24 13Q24.8 9.5 18.5 6.5Z" fill="#fff"/><ellipse cx="12" cy="8.6" rx="10.3" ry="7.3" fill="none" stroke="#fff" stroke-width="2.3"/><path d="M5 14L1.5 18.5Q6 18 9 16Z" fill="#fff"/></svg>
<div id="taskbar"></div>
<div class="a" style="left:0;top:860px;width:1440px;height:1px;background:#1b2a45"></div>
<div class="a" style="left:0;top:861px;width:1440px;height:1px;background:rgba(170,195,235,.8)"></div>
<div class="a" style="left:0;top:861px;width:1440px;height:39px;overflow:hidden">
<div style="position:absolute;left:550px;top:0;width:82px;height:26px;background:rgba(25,45,105,.24);clip-path:polygon(0 0,100% 0,57% 100%);filter:blur(2.5px)"></div>
<div style="position:absolute;left:940px;top:0;width:92px;height:24px;background:rgba(25,45,105,.24);clip-path:polygon(0 0,100% 0,58% 100%);filter:blur(2.5px)"></div>
<div style="position:absolute;left:698px;top:0;width:14px;height:39px;background:rgba(25,55,120,.35);filter:blur(3px)"></div>
<div style="position:absolute;left:1090px;top:0;width:16px;height:39px;background:rgba(25,55,120,.3);filter:blur(4px)"></div>
</div>
<!-- start orb -->
<svg class="a" style="left:8px;top:861px" width="38" height="38" viewBox="0 0 38 38"><defs><radialGradient id="orb" cx="50%" cy="85%" r="70%"><stop offset="0" stop-color="#54e0ff"/><stop offset=".35" stop-color="#1a8cc8"/><stop offset=".75" stop-color="#0d4a88"/><stop offset="1" stop-color="#0a2f60"/></radialGradient><linearGradient id="orbh" x1="0" y1="0" x2="0" y2="1"><stop offset="0" stop-color="#fff" stop-opacity=".55"/><stop offset="1" stop-color="#fff" stop-opacity=".05"/></linearGradient></defs><circle cx="19" cy="19" r="18" fill="url(#orb)" stroke="#9cc8ec" stroke-opacity=".7" stroke-width="1"/><ellipse cx="19" cy="11" rx="14" ry="9" fill="url(#orbh)"/>
<path d="M9.5 10.5Q13 8.5 17.5 10L16.5 17.5Q12.5 16 8.5 17.5Z" fill="#f25a22"/><path d="M19 10.3Q23.5 12 29 9.8L28 17Q23 19 18 17.7Z" fill="#8cc63f"/><path d="M8.3 19Q12.5 17.5 16.3 19L15.3 26.5Q11.5 25 7.2 26.5Z" fill="#3aa0e8"/><path d="M17.8 19.2Q22.5 21 27.8 18.8L26.8 26Q21.5 28 16.8 26.5Z" fill="#fdc61e"/></svg>
<!-- firefox -->
<svg class="a" style="left:73px;top:863px" width="32" height="32" viewBox="0 0 32 32"><defs><radialGradient id="ffx" cx="65%" cy="25%" r="80%"><stop offset="0" stop-color="#ffe226"/><stop offset=".4" stop-color="#ff8a2a"/><stop offset=".8" stop-color="#f5376b"/><stop offset="1" stop-color="#d01f8a"/></radialGradient><radialGradient id="ffp" cx="40%" cy="40%" r="70%"><stop offset="0" stop-color="#b36bff"/><stop offset="1" stop-color="#5b24c8"/></radialGradient></defs><path d="M21 1Q31 8 30 18Q29 30 16 31Q3 31 2 18Q2 11 6 7Q6 11 9 12Q12 6 19 7Q22 4 21 1Z" fill="url(#ffx)"/><circle cx="17" cy="17" r="7.5" fill="url(#ffp)"/><path d="M5 14Q9 13 12 15Q9 17 6 19Z" fill="#ff9a2a"/></svg>
<!-- wmp -->
<svg class="a" style="left:136px;top:868px" width="28" height="27" viewBox="0 0 28 27"><rect x="6" y="1.5" width="20" height="24" fill="#bfe2f6" stroke="#8cc8ea" stroke-width=".8"/><rect x="3.5" y="1" width="20" height="24.5" fill="#a8d6f2" stroke="#7fbce2" stroke-width=".8"/><rect x="1" y="0.5" width="20" height="25" fill="#94cdee" stroke="#6cb0de" stroke-width=".8"/><circle cx="10.5" cy="12.5" r="8.2" fill="#f07a12"/><circle cx="10.5" cy="12.5" r="6.8" fill="#f89a2a"/><path d="M8 7.5L15.5 12.5L8 17.5Z" fill="#fff"/></svg>
<!-- chrome button -->
<div class="a" style="left:184px;top:861px;width:58px;height:38px;border:1px solid rgba(20,30,60,.8);border-radius:3px;background:linear-gradient(#c7d3ea,#9fb2d7 50%,#8aa0c8);box-shadow:inset 0 0 0 1px rgba(255,255,255,.55)"></div>
<svg class="a" style="left:197px;top:865px" width="30" height="30" viewBox="0 0 30 30"><path d="M27.81 8.20 A14.5 14.5 0 0 0 2.71 7.31 L9.11 18.40 A6.8 6.8 0 0 1 15.00 8.20 Z" fill="#db4437"/><path d="M2.71 7.31 A14.5 14.5 0 0 0 14.49 29.49 L20.89 18.40 A6.8 6.8 0 0 1 9.11 18.40 Z" fill="#0f9d58"/><path d="M14.49 29.49 A14.5 14.5 0 0 0 27.81 8.20 L15.00 8.20 A6.8 6.8 0 0 1 20.89 18.40 Z" fill="#ffcd40"/><circle cx="15" cy="15" r="6.8" fill="#fff"/><circle cx="15" cy="15" r="5.3" fill="#4285f4"/></svg>
<!-- IE -->
<svg class="a" style="left:259px;top:863px" width="33" height="33" viewBox="0 0 33 33"><defs><linearGradient id="ieg" x1="0" y1="0" x2="0" y2="1"><stop offset="0" stop-color="#6fd8ff"/><stop offset="1" stop-color="#1a86d0"/></linearGradient></defs><path d="M24.6 22.5A8 8 0 1 1 25.5 17.5" fill="none" stroke="url(#ieg)" stroke-width="5"/><rect x="11" y="16" width="16.5" height="3.6" fill="#3fb4ee"/><path d="M5 30Q-1 26 9 13Q19 1 28 2Q33 4 28 12" fill="none" stroke="#f5b91a" stroke-width="2.6"/></svg>
<!-- excel button -->
<div class="a" style="left:308px;top:861px;width:58px;height:38px;border:1px solid rgba(20,30,60,.7);border-radius:3px;background:linear-gradient(rgba(255,255,255,.22),rgba(255,255,255,.06));box-shadow:inset 0 0 0 1px rgba(255,255,255,.3)"></div>
<svg class="a" style="left:321px;top:864px" width="30" height="29" viewBox="0 0 30 29"><defs><linearGradient id="xg" x1="0" y1="0" x2="1" y2="1"><stop offset="0" stop-color="#f4fbf2"/><stop offset="1" stop-color="#a9d8a0"/></linearGradient></defs><path d="M5 0.5H29.5V28.5H0.5V5Q0.5 0.5 5 0.5Z" fill="url(#xg)" stroke="#2e8540" stroke-width="1"/><path d="M4 4H10L14.5 11L19 4H25L17.5 14L24 22H18L14.5 16.5L11 22H5L11.5 14Z" fill="#2b8a3e"/><path d="M14 17L29 15V28H14Z" fill="#fff" opacity=".95"/><path d="M15 20H28M15 23H28M15 26H28M20 17V28M24 16.5V28" stroke="#5cb870" stroke-width="1"/></svg>
<!-- outlook button -->
<div class="a" style="left:370px;top:861px;width:53px;height:38px;border:1px solid rgba(20,30,60,.7);border-radius:3px;background:linear-gradient(rgba(255,255,255,.22),rgba(255,255,255,.06));box-shadow:inset 0 0 0 1px rgba(255,255,255,.3)"></div>
<svg class="a" style="left:380px;top:864px" width="30" height="29" viewBox="0 0 30 29"><defs><linearGradient id="og" x1="0" y1="0" x2="1" y2="1"><stop offset="0" stop-color="#fff2c0"/><stop offset="1" stop-color="#f5b53a"/></linearGradient></defs><path d="M5 0.5H29.5V28.5H0.5V5Q0.5 0.5 5 0.5Z" fill="url(#og)" stroke="#e08a10" stroke-width="1"/><path d="M9 19L27 14V27H9Z" fill="#fffaf0" stroke="#e0a040" stroke-width=".8"/><ellipse cx="9.5" cy="11.5" rx="6.3" ry="8" fill="none" stroke="#e5780c" stroke-width="4"/><circle cx="24.5" cy="12" r="4.3" fill="#fff8e8" stroke="#d9900f" stroke-width="1"/><path d="M24.5 9.5V12.3H26.5" fill="none" stroke="#c05a10" stroke-width=".9"/></svg>
<!-- folder button -->
<div class="a" style="left:425px;top:861px;width:1px;height:38px;background:rgba(20,30,60,.5)"></div>
<div class="a" style="left:432px;top:861px;width:54px;height:38px;border:1px solid rgba(20,30,60,.7);border-radius:3px;background:linear-gradient(rgba(255,255,255,.22),rgba(255,255,255,.06));box-shadow:inset 0 0 0 1px rgba(255,255,255,.3)"></div>
<div class="a" style="left:488px;top:861px;width:1px;height:38px;background:rgba(20,30,60,.5)"></div>
<svg class="a" style="left:441px;top:866px" width="33" height="30" viewBox="0 0 33 30"><path d="M2 4H11L13 6H31V26H2Z" fill="#e8c46a" stroke="#c9a04a" stroke-width="1"/><rect x="5" y="1.5" width="10" height="5" fill="#fffbe8" stroke="#d8c080" stroke-width=".6"/><rect x="6" y="2.5" width="3" height="2" fill="#2fb84a"/><rect x="13" y="3" width="10" height="5" fill="#fffbe8" stroke="#d8c080" stroke-width=".6"/><rect x="14" y="4" width="3" height="2" fill="#d83030"/><rect x="20" y="4.5" width="10" height="5" fill="#fffbe8" stroke="#d8c080" stroke-width=".6"/><rect x="21" y="5.5" width="3" height="2" fill="#2f8ae0"/><path d="M1.5 10H31.5V27H1.5Z" fill="#fbe3a0" stroke="#d6b060" stroke-width="1"/><path d="M6 29V18Q6 16 8 16H25Q27 16 27 18V29H22V21H11V29Z" fill="#8fd4f4" stroke="#4aa8d8" stroke-width="1"/></svg>
<!-- tray -->
<svg class="a" style="left:1276px;top:878px" width="10" height="6" viewBox="0 0 10 6"><path d="M0 5.5L5 0.5L10 5.5Z" fill="#fff"/></svg>
<svg class="a" style="left:1297px;top:873px" width="18" height="16" viewBox="0 0 18 16"><rect x="5.5" y="3" width="11" height="9" fill="#3a5d8a" stroke="#fff" stroke-width="1.4"/><path d="M8 14.5H14M11 12V14.5" stroke="#fff" stroke-width="1.4"/><path d="M1.5 1V6H5.5V1M3.5 6V15" fill="none" stroke="#fff" stroke-width="1.2"/></svg>
<svg class="a" style="left:1322px;top:873px" width="16" height="16" viewBox="0 0 16 16"><path d="M1 5.5H4L8 1.5V14.5L4 10.5H1Z" fill="#e8eef8"/><path d="M10.5 5Q12 8 10.5 11M12.5 3Q15 8 12.5 13" fill="none" stroke="#fff" stroke-width="1.2"/></svg>
<div class="a" style="left:1360px;top:866.5px;font-size:12px;color:#fff;letter-spacing:-0.25px">10:58 AM</div>
<div class="a" style="left:1356px;top:883px;font-size:12px;color:#fff;letter-spacing:-0.3px">31/08/2020</div>
<div class="a" style="left:1425px;top:861px;width:14px;height:39px;border:1px solid rgba(190,210,240,.6);background:linear-gradient(rgba(255,255,255,.3),rgba(255,255,255,.08))"></div>

</body></html>
